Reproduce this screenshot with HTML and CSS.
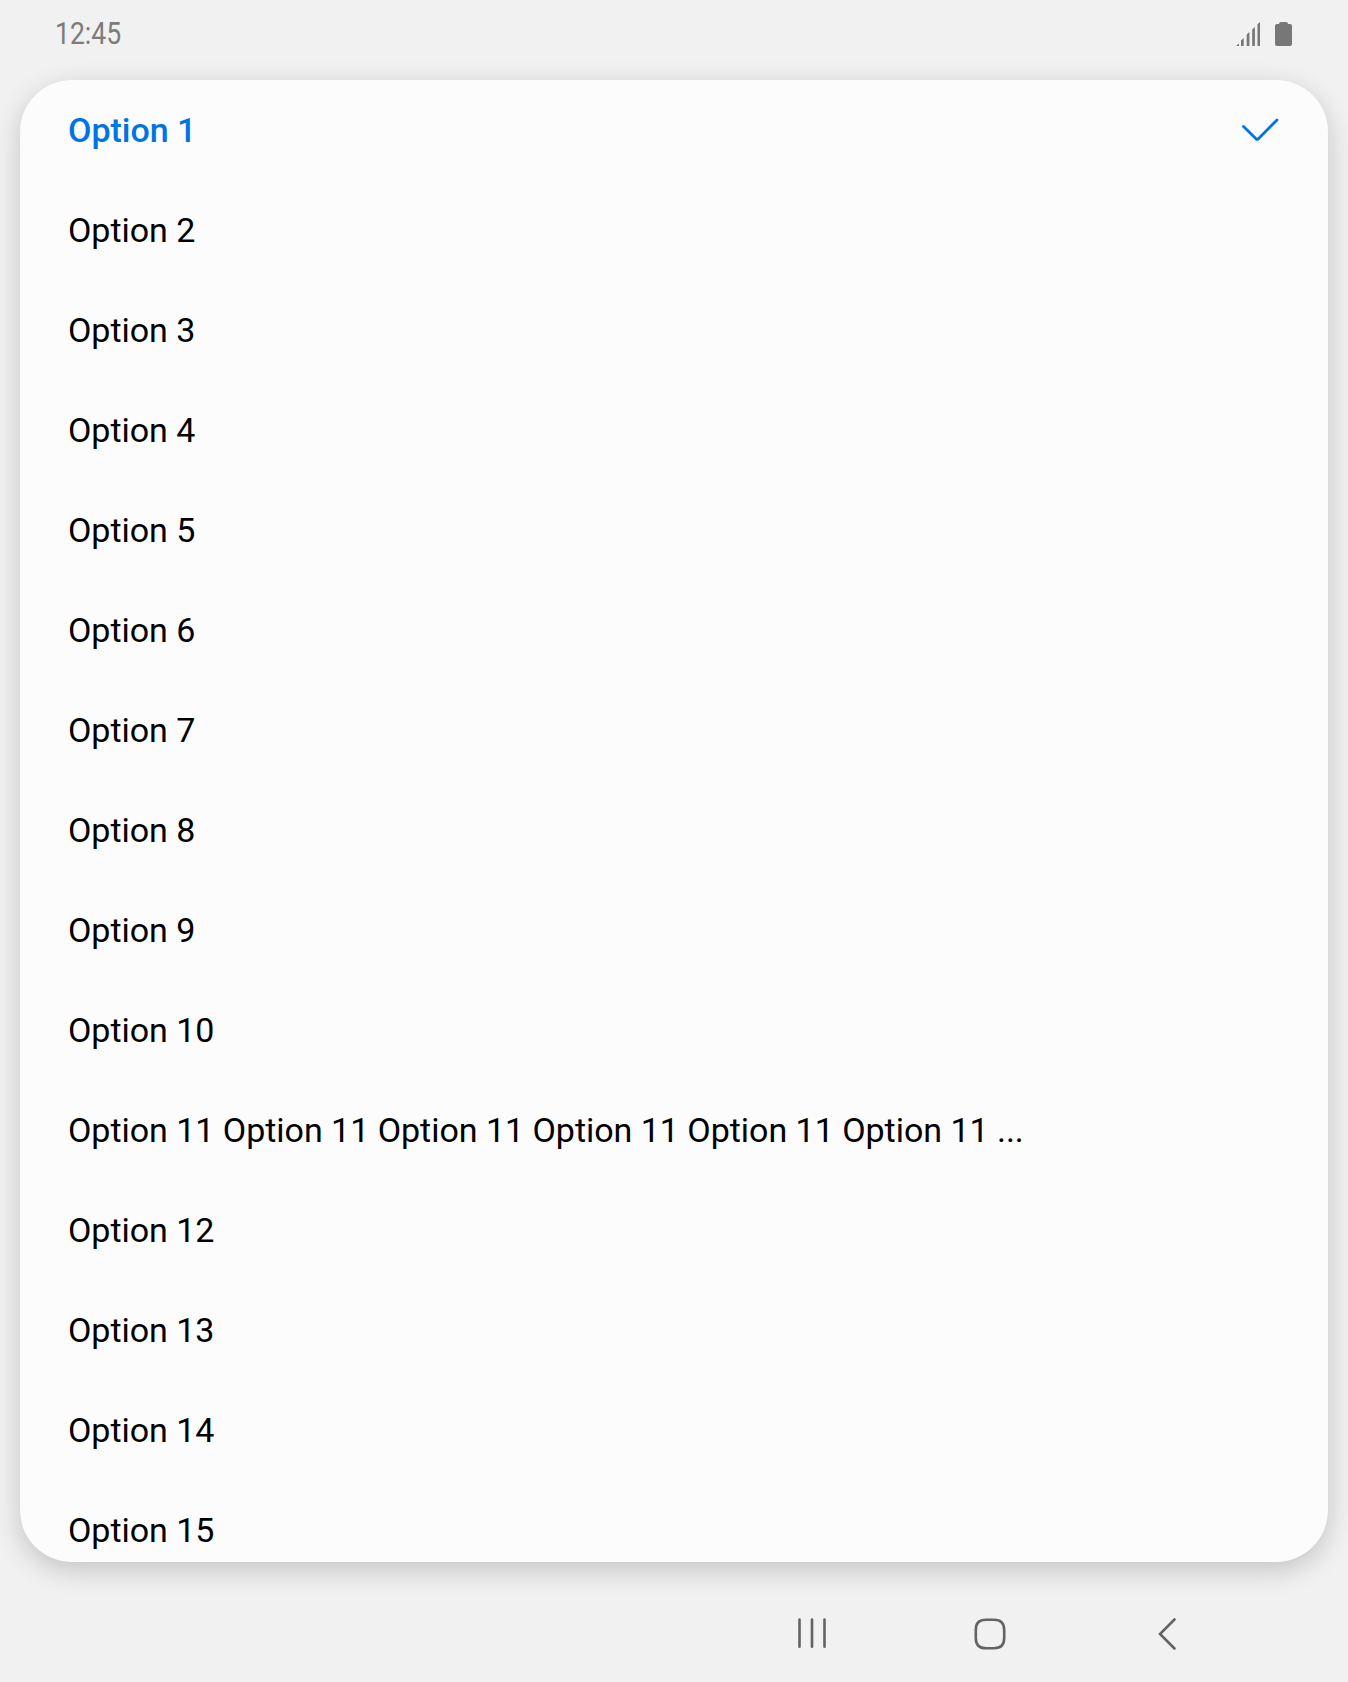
FILE: index.html
```html
<!DOCTYPE html>
<html lang="en">
<head>
<meta charset="utf-8">
<title>Options</title>
<link rel="stylesheet" href="styles.css">
</head>
<body>
<div class="screen">
  <header class="status-bar">
    <span class="clock">12:45</span>
    <div class="indicators">
      <svg class="signal" width="24" height="24" viewBox="0 0 24 24">
        <path d="M0 24L3 21.500V24ZM5 24V18.500L7.700 16V24ZM10.700 24V12.500L13.400 10V24ZM16.200 24V7.500L18.900 5V24ZM21.500 24V2.300L24 0V24Z"/>
      </svg>
      <svg class="battery" width="17" height="24" viewBox="0 0 17 24">
        <path d="M6 0H11Q13 0 13 2H15Q17 2 17 4V22Q17 24 15 24H2Q0 24 0 22V4Q0 2 2 2H4Q4 0 6 0Z"/>
      </svg>
    </div>
  </header>
  <ul class="menu">
    <li class="option selected">Option 1
      <svg class="check" width="38" height="24" viewBox="0 0 38 24">
        <path d="M2.500 8.500L15 20.800Q16.200 21.800 17.400 20.800L36 2"/>
      </svg>
    </li>
    <li class="option">Option 2</li>
    <li class="option">Option 3</li>
    <li class="option">Option 4</li>
    <li class="option">Option 5</li>
    <li class="option">Option 6</li>
    <li class="option">Option 7</li>
    <li class="option">Option 8</li>
    <li class="option">Option 9</li>
    <li class="option">Option 10</li>
    <li class="option">Option 11 Option 11 Option 11 Option 11 Option 11 Option 11 ...</li>
    <li class="option">Option 12</li>
    <li class="option">Option 13</li>
    <li class="option">Option 14</li>
    <li class="option">Option 15</li>
  </ul>
  <nav class="nav-bar">
    <svg width="30" height="32" viewBox="0 0 30 32"><path d="M2.500 1.600V28.700M15 1.600V28.700M27.500 1.600V28.700"/></svg>
    <svg width="32" height="32" viewBox="0 0 32 32"><path d="M12 1.800H20C27 1.800 30.200 5 30.200 12V20C30.200 27 27 30.200 20 30.200H12C5 30.200 1.800 27 1.800 20V12C1.800 5 5 1.800 12 1.800Z"/></svg>
    <svg width="20" height="34" viewBox="0 0 20 34"><path d="M17.500 2.500L3 17L17.500 31.500"/></svg>
  </nav>
</div>
</body>
</html>
```
FILE: styles.css
```css
* {
  box-sizing: border-box;
}

body {
  margin: 0;
  background: #f1f1f1;
  font-family: Roboto, sans-serif;
}

.screen {
  height: 1682px;
  display: flex;
  flex-direction: column;
  overflow: hidden;
}

.status-bar {
  height: 80px;
  flex: none;
  padding: 0 56px 12px 55px;
  display: flex;
  align-items: center;
  justify-content: space-between;
}

.clock {
  font-size: 31px;
  line-height: 36px;
  color: #7c7c7c;
  transform: scaleX(0.857);
  transform-origin: left;
}

.indicators {
  display: flex;
  gap: 15px;
  fill: #777;
}

.menu {
  height: 1482px;
  flex: none;
  margin: 0 20px;
  padding: 0;
  list-style: none;
  overflow: hidden;
  background: #fcfcfc;
  border-radius: 52px;
  box-shadow: 0 8px 27px rgba(0, 0, 0, 0.19);
}

.option {
  height: 100px;
  padding: 0 49px 0 48px;
  display: flex;
  align-items: center;
  justify-content: space-between;
  font-size: 34px;
  line-height: 40px;
  letter-spacing: -0.03px;
  color: #000;
  white-space: nowrap;
}

.selected {
  color: #0074e3;
  font-weight: 500;
}

.check {
  fill: none;
  stroke: #0074e3;
  stroke-width: 2.8;
  stroke-linecap: round;
}

.nav-bar {
  flex: 1;
  padding: 24px 171px 0 0;
  display: flex;
  align-items: center;
  justify-content: flex-end;
  gap: 150px;
  fill: none;
  stroke: #636363;
  stroke-width: 2.6;
  stroke-linecap: round;
}

.nav-bar svg:first-child {
  margin-right: -3px;
}

.nav-bar svg:nth-child(2) {
  margin-right: 1px;
}
```
